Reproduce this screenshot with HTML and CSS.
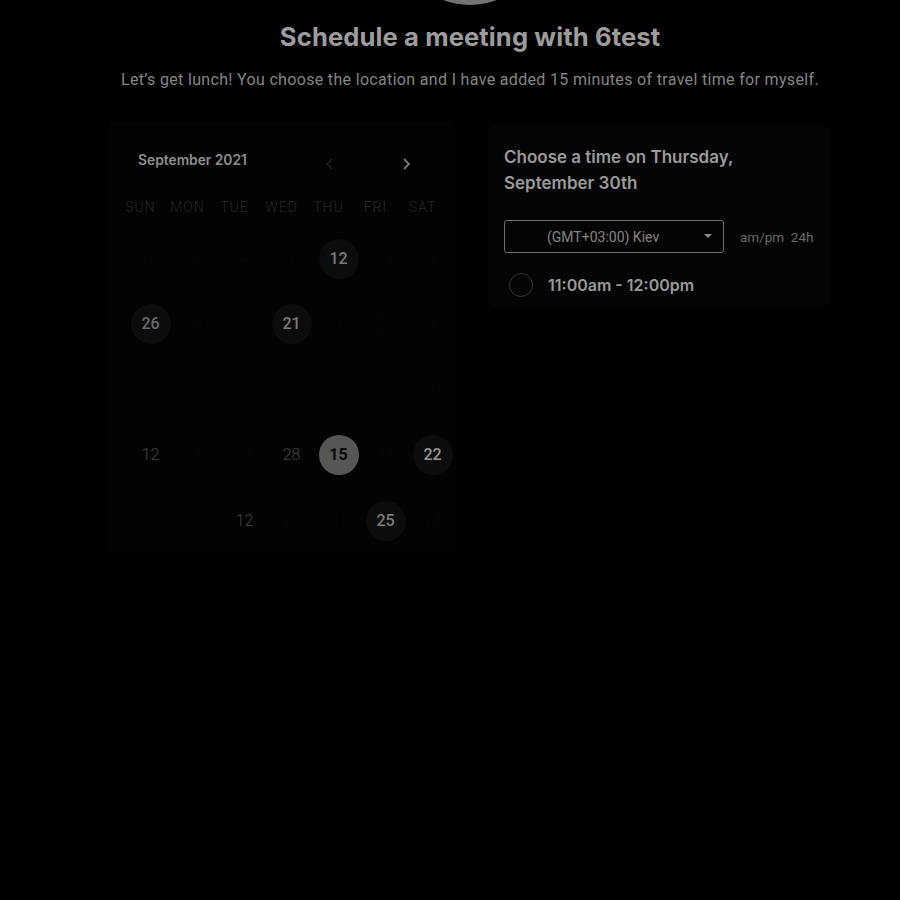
FILE: index.html
```html
<!DOCTYPE html>
<html>
<head>
<meta charset="utf-8">
<link rel="stylesheet" href="styles.css">
</head>
<body>
<div class="page">
  <div class="avatar"></div>
  <h1 class="title">Schedule a meeting with 6test</h1>
  <p class="subtitle">Let’s get lunch! You choose the location and I have added 15 minutes of travel time for myself.</p>
  <div class="main">
    <div class="calendar">
      <div class="cal-head">
        <span class="month">September 2021</span>
        <div class="nav">
          <svg class="prev" width="12" height="14" viewBox="0 0 12 14"><path d="M8 2 L3 7 L8 12" fill="none" stroke="#1c1c1c" stroke-width="1.5"/></svg>
          <svg class="next" width="12" height="14" viewBox="0 0 12 14"><path d="M4 2 L9 7 L4 12" fill="none" stroke="#777" stroke-width="1.8"/></svg>
        </div>
      </div>
      <div class="weekdays">
        <span>SUN</span><span>MON</span><span>TUE</span><span>WED</span><span>THU</span><span>FRI</span><span>SAT</span>
      </div>
      <div class="days">
        <span class="d ghost">1</span><span class="d ghost">2</span><span class="d ghost">4</span><span class="d ghost">7</span><span class="d avail">12</span><span class="d ghost">13</span><span class="d ghost">5</span>
        <span class="d avail dim">26</span><span class="d ghost">8</span><span class="d ghost">27</span><span class="d avail">21</span><span class="d ghost">9</span><span class="d ghost">27</span><span class="d ghost">3</span>
        <span class="d ghost">.</span><span class="d ghost"></span><span class="d ghost">.</span><span class="d ghost"></span><span class="d ghost"></span><span class="d ghost">.</span><span class="d ghost">1</span>
        <span class="d off">12</span><span class="d ghost">3</span><span class="d ghost">21</span><span class="d off">28</span><span class="d selected">15</span><span class="d ghost">31</span><span class="d avail light">22</span>
        <span class="d ghost">22</span><span class="d ghost">0</span><span class="d off">12</span><span class="d ghost">20</span><span class="d ghost">31</span><span class="d avail">25</span><span class="d ghost">24</span>
      </div>
    </div>
    <div class="times">
      <h2 class="times-title">Choose a time on Thursday, September 30th</h2>
      <div class="tz-row">
        <div class="tz-select">
          <span>(GMT+03:00) Kiev</span>
          <svg class="caret" width="8" height="5" viewBox="0 0 8 5"><path d="M0 0 L8 0 L4 4 Z" fill="#8a8a8a"/></svg>
        </div>
        <span class="fmt">am/pm&nbsp; 24h</span>
      </div>
      <div class="slot">
        <span class="radio"></span>
        <span class="slot-text">11:00am - 12:00pm</span>
      </div>
    </div>
  </div>
</div>
</body>
</html>
```
FILE: styles.css
```css
html, body {
  margin: 0;
  padding: 0;
  background: #000;
  height: 100%;
}
body {
  font-family: Roboto, "Liberation Sans", sans-serif;
  color: #888;
  overflow: hidden;
}
.page {
  width: 740px;
  margin-left: 100px;
  display: flex;
  flex-direction: column;
  align-items: center;
}
.avatar {
  width: 150px;
  height: 150px;
  border-radius: 50%;
  background: #727272;
  margin-top: -145px;
}
.title {
  font-family: Inter, "Liberation Sans", sans-serif;
  font-weight: 700;
  font-size: 25.6px;
  line-height: 30px;
  color: #9c9c9c;
  margin: 17px 0 0;
  letter-spacing: 0.1px;
}
.subtitle {
  font-size: 16px;
  line-height: 20px;
  color: #858585;
  margin: 18px 0 0;
  letter-spacing: 0.33px;
}
.main {
  align-self: stretch;
  display: flex;
  margin-top: 32px;
  gap: 32px;
}
.calendar {
  width: 348px;
  margin-left: 8px;
  height: 432px;
  box-sizing: border-box;
  background: #030303;
  border-radius: 6px;
  padding: 26px 0 0 0;
}
.cal-head {
  display: flex;
  align-items: center;
  padding-left: 30px;
  height: 24px;
}
.month {
  font-family: Inter, "Liberation Sans", sans-serif;
  font-weight: 600;
  font-size: 13.8px;
  color: #8e8e8e;
  width: 186px;
}
.nav {
  display: flex;
  gap: 64px;
  align-items: center;
  margin-top: 8px;
}
.weekdays {
  display: grid;
  grid-template-columns: repeat(7, 47px);
  margin-top: 23px;
  padding-left: 9px;
  height: 24px;
  align-items: center;
}
.weekdays span {
  text-align: center;
  font-size: 14px;
  font-weight: 300;
  letter-spacing: 1px;
  color: #262626;
}
.days {
  display: grid;
  grid-template-columns: repeat(7, 47px);
  grid-auto-rows: 65.5px;
  padding-left: 19px;
  margin-top: 7px;
}
.d {
  width: 40px;
  height: 40px;
  border-radius: 50%;
  justify-self: center;
  align-self: center;
  display: flex;
  align-items: center;
  justify-content: center;
  font-size: 16px;
  line-height: 1;
}
.ghost { color: #070707; font-weight: 300; }
.off { color: #444; font-weight: 300; }
.avail {
  background: #0c0c0c;
  color: #7a7a7a;
  font-weight: 500;
}
.avail.dim { color: #6a6a6a; }
.avail.light { color: #969696; }
.selected {
  background: #565656;
  color: #0a0a0a;
  font-weight: 700;
}
.times {
  width: 342px;
  height: 180px;
  box-sizing: border-box;
  margin-top: 4px;
  background: #040404;
  border-radius: 6px;
  padding: 18px 16px 0;
}
.times-title {
  font-family: Inter, "Liberation Sans", sans-serif;
  font-weight: 600;
  font-size: 17px;
  line-height: 26px;
  color: #9a9a9a;
  margin: 0;
  max-width: 260px;
}
.tz-row {
  display: flex;
  align-items: center;
  margin-top: 24px;
  gap: 16px;
}
.tz-select {
  width: 220px;
  height: 33px;
  box-sizing: border-box;
  border: 1px solid #6e6e6e;
  border-radius: 3px;
  display: flex;
  align-items: center;
  padding-left: 42px;
  padding-right: 11px;
  font-size: 14px;
  color: #858585;
}
.tz-select span { flex: 1; }
.fmt {
  font-size: 13.5px;
  color: #6a6a6a;
}
.slot {
  display: flex;
  align-items: center;
  margin-top: 20px;
  padding-left: 5px;
}
.radio {
  width: 22px;
  height: 22px;
  border-radius: 50%;
  border: 1px solid #363636;
}
.slot-text {
  margin-left: 15px;
  font-family: Inter, "Liberation Sans", sans-serif;
  font-weight: 600;
  font-size: 16px;
  color: #9a9a9a;
}
```
